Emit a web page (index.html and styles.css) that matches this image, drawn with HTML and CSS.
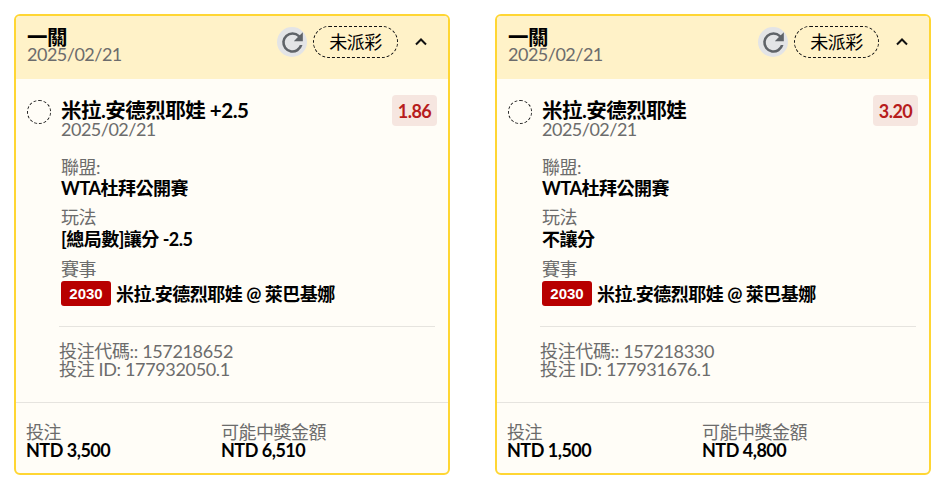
FILE: index.html
```html
<!DOCTYPE html>
<html lang="zh-Hant">
<head>
<meta charset="utf-8">
<title>Bets</title>
<link rel="stylesheet" href="styles.css">
</head>
<body>
<main class="cards">
  <article class="card">
    <header class="head">
      <div class="head-text">
        <div class="head-title">一關</div>
        <div class="muted date">2025/02/21</div>
      </div>
      <div class="head-actions">
        <span class="refresh"><svg class="refresh-icon" viewBox="0 0 24 24" width="31" height="31"><path fill="#5f6368" d="M17.65 6.35A7.96 7.96 0 0 0 12 4a8 8 0 1 0 7.73 10h-2.08A6 6 0 1 1 12 6c1.66 0 3.14.69 4.22 1.78L13 11h7V4l-2.35 2.35z"/></svg></span>
        <span class="status">未派彩</span>
        <svg class="chev" viewBox="0 0 12 8" width="12" height="8"><path d="M1 6.5l5-5 5 5" fill="none" stroke="#111" stroke-width="2"/></svg>
      </div>
    </header>
    <section class="body">
      <div class="sel">
        <span class="radio"></span>
        <div class="sel-text">
          <div class="sel-name">米拉.安德烈耶娃 +2.5</div>
          <div class="muted date">2025/02/21</div>
        </div>
        <span class="odds">1.86</span>
      </div>
      <div class="info">
        <div class="muted">聯盟:</div>
        <div class="val">WTA杜拜公開賽</div>
        <div class="muted lbl">玩法</div>
        <div class="val val-mid">[總局數]讓分 -2.5</div>
        <div class="muted lbl">賽事</div>
        <div class="event"><span class="tag">2030</span><span class="val">米拉.安德烈耶娃 @ 萊巴基娜</span></div>
      </div>
      <div class="codes muted">
        <div>投注代碼:: 157218652</div>
        <div>投注 ID: 177932050.1</div>
      </div>
    </section>
    <footer class="foot">
      <div class="foot-col">
        <div class="muted">投注</div>
        <div class="amount">NTD 3,500</div>
      </div>
      <div class="foot-col">
        <div class="muted">可能中獎金額</div>
        <div class="amount">NTD 6,510</div>
      </div>
    </footer>
  </article>
  <article class="card">
    <header class="head">
      <div class="head-text">
        <div class="head-title">一關</div>
        <div class="muted date">2025/02/21</div>
      </div>
      <div class="head-actions">
        <span class="refresh"><svg class="refresh-icon" viewBox="0 0 24 24" width="31" height="31"><path fill="#5f6368" d="M17.65 6.35A7.96 7.96 0 0 0 12 4a8 8 0 1 0 7.73 10h-2.08A6 6 0 1 1 12 6c1.66 0 3.14.69 4.22 1.78L13 11h7V4l-2.35 2.35z"/></svg></span>
        <span class="status">未派彩</span>
        <svg class="chev" viewBox="0 0 12 8" width="12" height="8"><path d="M1 6.5l5-5 5 5" fill="none" stroke="#111" stroke-width="2"/></svg>
      </div>
    </header>
    <section class="body">
      <div class="sel">
        <span class="radio"></span>
        <div class="sel-text">
          <div class="sel-name">米拉.安德烈耶娃</div>
          <div class="muted date">2025/02/21</div>
        </div>
        <span class="odds">3.20</span>
      </div>
      <div class="info">
        <div class="muted">聯盟:</div>
        <div class="val">WTA杜拜公開賽</div>
        <div class="muted lbl">玩法</div>
        <div class="val val-mid">不讓分</div>
        <div class="muted lbl">賽事</div>
        <div class="event"><span class="tag">2030</span><span class="val">米拉.安德烈耶娃 @ 萊巴基娜</span></div>
      </div>
      <div class="codes muted">
        <div>投注代碼:: 157218330</div>
        <div>投注 ID: 177931676.1</div>
      </div>
    </section>
    <footer class="foot">
      <div class="foot-col">
        <div class="muted">投注</div>
        <div class="amount">NTD 1,500</div>
      </div>
      <div class="foot-col">
        <div class="muted">可能中獎金額</div>
        <div class="amount">NTD 4,800</div>
      </div>
    </footer>
  </article>
</main>
</body>
</html>
```
FILE: styles.css
```css
* { box-sizing: border-box; }
html, body { margin: 0; background: #fff; }
body {
  font-family: Lato, "Noto Sans CJK TC", sans-serif;
  font-size: 18px;
  line-height: 18px;
  letter-spacing: -0.5px;
  color: #000;
  overflow: hidden;
}
.cards { display: flex; gap: 45px; padding: 14px; }
.card {
  width: 436px;
  height: 461px;
  border: 2px solid #ffd633;
  border-radius: 6px;
  background: #fffdf7;
  display: flex;
  flex-direction: column;
  overflow: hidden;
}
.head {
  height: 63px;
  background: #fff2c8;
  padding: 11px 21px 0 11px;
  display: flex;
  justify-content: space-between;
  align-items: flex-start;
}
.head-title { font-weight: 700; font-size: 20.5px; line-height: 20px; }
.head .date { margin-top: -2px; }
.head-actions { display: flex; align-items: center; height: 30px; }
.refresh {
  width: 30px; height: 30px; border-radius: 50%;
  background: #e3e4e6;
  display: flex; align-items: center; justify-content: center;
}
.refresh-icon { flex: none; }
.status {
  margin-left: 6px;
  width: 85px; height: 32px;
  border: 1px dashed #111;
  border-radius: 16px;
  display: flex; align-items: center; justify-content: center;
}
.chev { margin-left: 17px; }
.muted { color: #6c6c6c; }
.body { flex: 1; padding: 0 11px 0 11px; }
.sel { display: flex; align-items: flex-start; padding-top: 16px; }
.radio {
  width: 24px; height: 24px; margin-top: 5px;
  border: 1px dashed #222; border-radius: 50%;
  flex: none;
}
.sel-text { flex: 1; margin-left: 10px; padding-top: 4px; }
.sel-name { font-weight: 700; font-size: 20.5px; line-height: 22px; }
.sel-text .date { line-height: 16px; }
.odds {
  background: #f6e6e0; color: #b71c1c;
  font-weight: 700; border-radius: 4px;
  width: 45px; height: 31px;
  display: flex; align-items: center; justify-content: center;
}
.info { padding-left: 34px; margin-top: 21px; }
.val { font-weight: 700; line-height: 24px; }
.val-mid { line-height: 26px; }
.lbl { margin-top: 8px; }
.event { display: flex; align-items: center; margin-top: 3px; }
.tag {
  background: #b80000; color: #fff;
  font-family: "Liberation Sans", sans-serif;
  font-size: 15px; font-weight: 700; letter-spacing: 0;
  width: 50px; height: 25px; border-radius: 3px;
  display: flex; align-items: center; justify-content: center;
  margin-right: 5px;
}
.codes {
  margin: 20px 2px 0 32px;
  padding-top: 15px;
  border-top: 1px solid #e6e4df;
  letter-spacing: -0.35px;
}
.foot {
  border-top: 1px solid #e6e4df;
  height: 71px;
  padding: 20px 10px 0;
  display: flex;
}
.foot-col { width: 195px; }
.amount { font-weight: 700; }
```
